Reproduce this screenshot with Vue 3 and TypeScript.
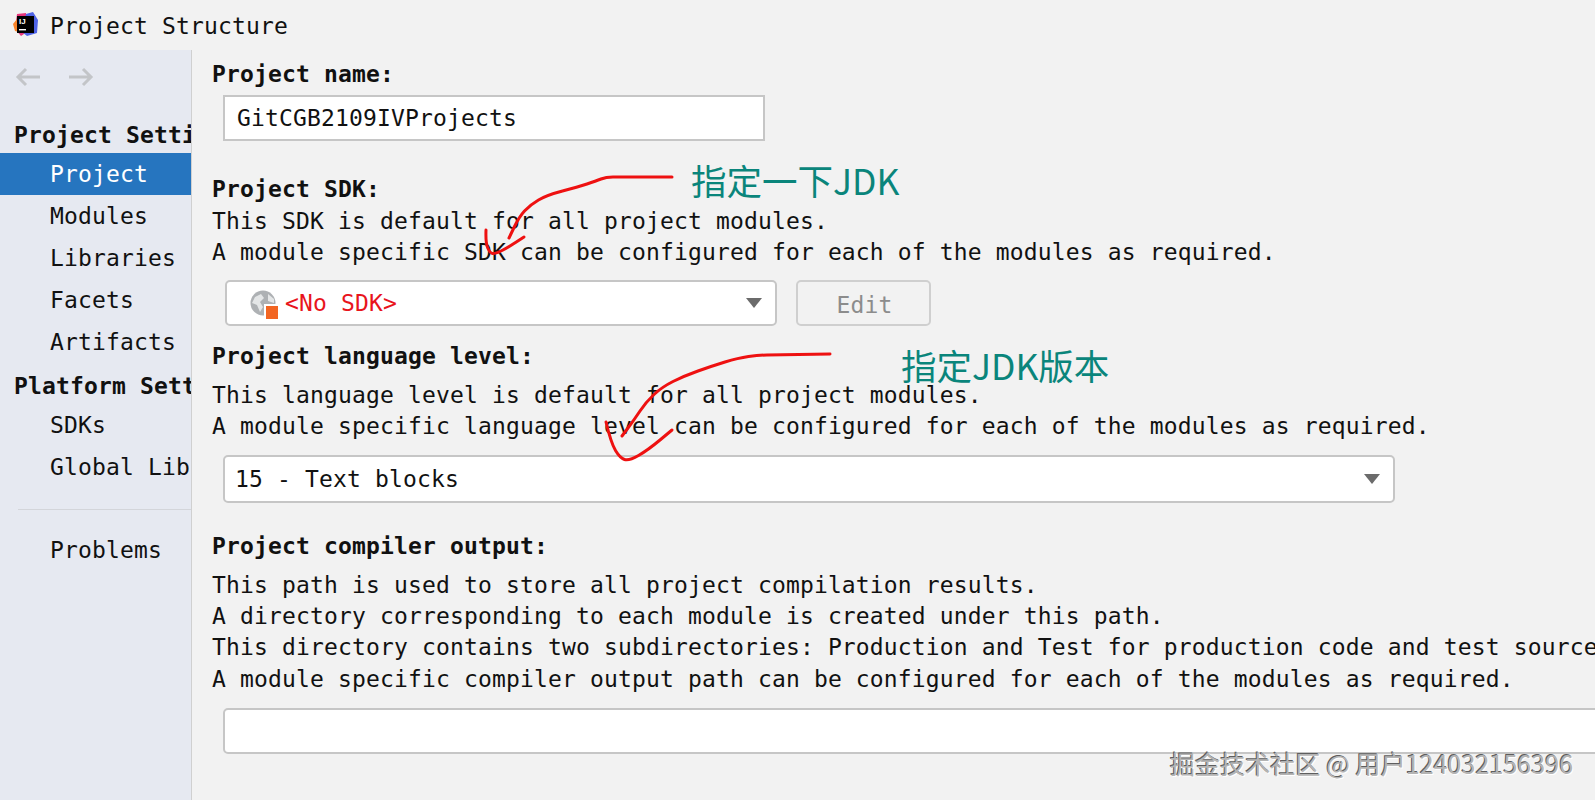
<script setup lang="ts">
type Point = [number, number];

const settingsItems = ["Project", "Modules", "Libraries", "Facets", "Artifacts"];
const platformItems = ["SDKs", "Global Libraries"];

const strokes: Point[][] = [
  [[672, 177], [620, 177], [606, 177], [596, 181], [578, 187], [547, 195], [530, 205], [519, 217], [509, 238]],
  [[486, 230], [485.5, 243], [490, 253], [495, 254], [507, 248], [524, 237]],
  [[830, 354], [775, 355], [759, 355], [738, 358], [712, 366], [684, 376], [662, 387], [646, 402], [634, 420], [622, 436]],
  [[606, 422], [611, 443], [620, 458], [629, 461], [648, 450], [672, 430]],
];

// round off the pen strokes through the midpoints
const toPath = (pts: Point[]) => {
  let d = `M${pts[0][0]} ${pts[0][1]}`;
  for (let i = 1; i < pts.length - 1; i++) {
    const mx = (pts[i][0] + pts[i + 1][0]) / 2;
    const my = (pts[i][1] + pts[i + 1][1]) / 2;
    d += ` Q${pts[i][0]} ${pts[i][1]} ${mx} ${my}`;
  }
  const last = pts[pts.length - 1];
  return `${d} L${last[0]} ${last[1]}`;
};

const marks = strokes.map(toPath);
</script>

<template>
  <div class="window">
    <header class="titlebar">
      <svg class="logo" width="25" height="25" viewBox="0 0 25 25">
        <path d="M4 2 L13 1 L14 20 L8 24 L2 17 Z" fill="#e8357a" />
        <path d="M13 2 L20 0 L25 8 L24 21 L14 24 L9 20 Z" fill="#4f63e6" />
        <path d="M0 12 L4 7 L6 20 L2 19 Z" fill="#f7842a" />
        <rect x="4" y="4" width="17" height="17" fill="#000" />
        <text x="6" y="12" class="logo-text">IJ</text>
        <rect x="6" y="17" width="7" height="1.4" fill="#fff" />
      </svg>
      <span>Project Structure</span>
    </header>

    <div class="body">
      <aside class="sidebar">
        <div class="history">
          <svg width="26" height="20" viewBox="0 0 26 20" fill="none" stroke="#c3c5c8" stroke-width="3">
            <path d="M25 10 H3 M11 2 L3 10 L11 18" />
          </svg>
          <svg width="26" height="20" viewBox="0 0 26 20" fill="none" stroke="#c3c5c8" stroke-width="3">
            <path d="M1 10 H23 M15 2 L23 10 L15 18" />
          </svg>
        </div>
        <div class="group-title">Project Settings</div>
        <div
          v-for="(item, i) in settingsItems"
          :key="item"
          class="nav-item"
          :class="{ selected: i === 0 }"
        >
          {{ item }}
        </div>
        <div class="group-title platform">Platform Settings</div>
        <div v-for="item in platformItems" :key="item" class="nav-item">{{ item }}</div>
        <div class="divider"></div>
        <div class="nav-item">Problems</div>
      </aside>

      <main class="content">
        <div class="label name-label">Project name:</div>
        <div class="field name-field">GitCGB2109IVProjects</div>

        <div class="label sdk-label">Project SDK:</div>
        <p class="note first">This SDK is default for all project modules.</p>
        <p class="note">A module specific SDK can be configured for each of the modules as required.</p>
        <div class="sdk-row">
          <div class="field combo sdk-combo">
            <svg class="globe" width="31" height="32" viewBox="0 0 31 32">
              <circle cx="14" cy="16" r="12.5" fill="#aeb1b4" />
              <path d="M6 10 L12 7 L15 11 L11 15 L14 20 L11 25 L8 18 L3 16 Z" fill="#e4e6e7" />
              <path d="M19 7 L25 12 L25 16 L19 14 Z" fill="#e4e6e7" />
              <rect x="15" y="17" width="16" height="15" fill="#fff" />
              <rect x="17" y="19" width="12" height="13" fill="#f26522" />
            </svg>
            <span class="no-sdk">&lt;No SDK&gt;</span>
            <span class="caret"></span>
          </div>
          <div class="edit-btn">Edit</div>
        </div>

        <div class="label level-label">Project language level:</div>
        <p class="note first">This language level is default for all project modules.</p>
        <p class="note">A module specific language level can be configured for each of the modules as required.</p>
        <div class="field combo level-combo">
          <span>15 - Text blocks</span>
          <span class="caret"></span>
        </div>

        <div class="label output-label">Project compiler output:</div>
        <p class="note first">This path is used to store all project compilation results.</p>
        <p class="note">A directory corresponding to each module is created under this path.</p>
        <p class="note">This directory contains two subdirectories: Production and Test for production code and test sources, respectively.</p>
        <p class="note last">A module specific compiler output path can be configured for each of the modules as required.</p>
        <div class="field output-field"></div>
      </main>
    </div>

    <svg class="ink" width="1595" height="800" viewBox="0 0 1595 800" fill="none">
      <path v-for="d in marks" :key="d" :d="d" stroke="#ee1111" stroke-width="3" stroke-linejoin="round" stroke-linecap="round" />
    </svg>
    <div class="callout callout-jdk">指定一下JDK</div>
    <div class="callout callout-version">指定JDK版本</div>
    <div class="watermark">掘金技术社区 @ 用户124032156396</div>
  </div>
</template>

<style scoped>
.window {
  position: relative;
  width: 1595px;
  height: 800px;
  overflow: hidden;
  background: #f2f2f2;
  color: #111;
  font-family: "DejaVu Sans Mono", "Liberation Mono", monospace;
  font-size: 23px;
  letter-spacing: 0.15px;
}

.titlebar {
  height: 50px;
  display: flex;
  align-items: center;
  gap: 12px;
  padding: 2px 0 0 13px;
  box-sizing: border-box;
}

.logo {
  margin-top: -3px;
}

.logo-text {
  fill: #fff;
  font-size: 8px;
  font-weight: 700;
  font-family: "Liberation Sans", sans-serif;
  letter-spacing: 0;
}

.body {
  display: flex;
  height: 750px;
}

.sidebar {
  width: 192px;
  flex: none;
  box-sizing: border-box;
  background: #e6e9f1;
  border-right: 1px solid #d0d0d0;
  overflow: hidden;
  white-space: nowrap;
}

.history {
  display: flex;
  gap: 27px;
  padding: 17px 0 0 15px;
  height: 68px;
  box-sizing: border-box;
}

.group-title {
  height: 35px;
  line-height: 35px;
  padding-left: 14px;
  font-weight: 700;
}

.group-title.platform {
  margin-top: 6px;
}

.nav-item {
  height: 42px;
  line-height: 42px;
  padding-left: 50px;
}

.nav-item.selected {
  background: #2675bf;
  color: #fff;
}

.divider {
  height: 1px;
  margin: 21px 0 19px 18px;
  background: #d3d5da;
}

.content {
  flex: 1;
  min-width: 0;
  padding-left: 20px;
  white-space: nowrap;
}

.label {
  font-weight: 700;
  line-height: 31px;
}

.name-label {
  margin-top: 9px;
}

.note {
  margin: 0;
  line-height: 31px;
}

.field {
  box-sizing: border-box;
  height: 46px;
  background: #fff;
  border: 2px solid #c6c6c6;
  display: flex;
  align-items: center;
  padding-left: 12px;
}

.name-field {
  width: 542px;
  margin: 5px 0 0 11px;
}

.sdk-label {
  margin-top: 33px;
}

.sdk-label + .note {
  margin-top: 1px;
}

.sdk-row {
  display: flex;
  gap: 19px;
  margin: 12px 0 0 13px;
}

.combo {
  border-radius: 5px;
  justify-content: space-between;
  padding-right: 13px;
}

.sdk-combo {
  width: 552px;
  padding-left: 22px;
  justify-content: flex-start;
}

.globe {
  flex: none;
  margin-right: 5px;
}

.no-sdk {
  color: #e8141c;
}

.sdk-combo .caret {
  margin-left: auto;
}

.caret {
  width: 0;
  height: 0;
  border-left: 8px solid transparent;
  border-right: 8px solid transparent;
  border-top: 10px solid #6b6b6b;
}

.edit-btn {
  box-sizing: border-box;
  width: 135px;
  height: 46px;
  padding: 3px 0 0 2px;
  display: flex;
  align-items: center;
  justify-content: center;
  border: 2px solid #cfcfcf;
  border-radius: 5px;
  color: #8c8c8c;
}

.level-label {
  margin-top: 15px;
}

.level-label + .note {
  margin-top: 8px;
}

.level-combo {
  width: 1172px;
  height: 48px;
  margin: 13px 0 0 11px;
  padding-left: 10px;
}

.output-label {
  margin-top: 28px;
}

.output-label + .note {
  margin-top: 8px;
}

.note.last {
  margin-top: 1px;
}

.output-field {
  width: 1400px;
  margin: 13px 0 0 11px;
  border-radius: 5px;
}

.ink {
  position: absolute;
  inset: 0;
  pointer-events: none;
}

.callout {
  position: absolute;
  font-family: "Noto Sans CJK SC", "Noto Sans", sans-serif;
  font-size: 35.5px;
  line-height: 44px;
  color: #0a857b;
  letter-spacing: 0;
}

.callout-jdk {
  left: 691px;
  top: 158px;
}

.callout-version {
  left: 901px;
  top: 343px;
}

.watermark {
  position: absolute;
  left: 1170px;
  top: 747px;
  font-family: "Noto Sans CJK SC", "Noto Sans", sans-serif;
  font-size: 25px;
  line-height: 32px;
  letter-spacing: 0.08px;
  color: #b4b4b4;
  text-shadow: -1px -1px 0 #5e5e5e, 1px 1px 0 #fff;
}
</style>
